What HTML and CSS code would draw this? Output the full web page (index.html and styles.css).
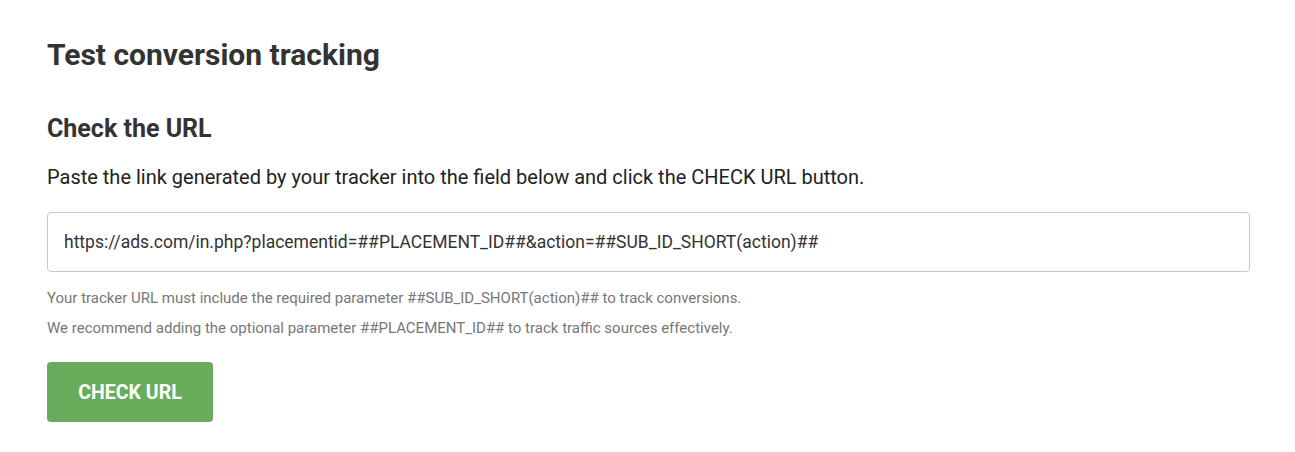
FILE: index.html
```html
<!DOCTYPE html>
<html lang="en">
<head>
<meta charset="utf-8">
<title>Test conversion tracking</title>
<link rel="stylesheet" href="styles.css">
</head>
<body>
<main class="page">
  <h1 class="title">Test conversion tracking</h1>
  <h2 class="subtitle">Check the URL</h2>
  <p class="lead">Paste the link generated by your tracker into the field below and click the CHECK URL button.</p>
  <div class="field">https://ads.com/in.php?placementid=##PLACEMENT_ID##&amp;action=##SUB_ID_SHORT(action)##</div>
  <p class="hint">Your tracker URL must include the required parameter ##SUB_ID_SHORT(action)## to track conversions.</p>
  <p class="hint">We recommend adding the optional parameter ##PLACEMENT_ID## to track traffic sources effectively.</p>
  <button class="btn" type="button">CHECK URL</button>
</main>
</body>
</html>
```

FILE: styles.css
```css
* { box-sizing: border-box; }
html, body { margin: 0; padding: 0; background: #fff; }
body { font-family: Roboto, "Noto Sans", sans-serif; color: #333; }
.page {
  padding: 37px 45px 0 47px;
  display: flex;
  flex-direction: column;
  align-items: flex-start;
}
.title {
  margin: 0;
  font-size: 30px;
  line-height: 36px;
  font-weight: 700;
  color: #333;
}
.subtitle {
  margin: 41px 0 0;
  font-size: 25px;
  line-height: 30px;
  font-weight: 700;
  color: #333;
}
.lead {
  margin: 19px 0 0;
  font-size: 20px;
  line-height: 28px;
  color: #222;
}
.field {
  align-self: stretch;
  margin-top: 21px;
  height: 60px;
  border: 1px solid #c8c8c8;
  border-radius: 4px;
  padding: 0 16px;
  display: flex;
  align-items: center;
  font-size: 17.5px;
  color: #333;
}
.hint {
  margin: 0;
  font-size: 15px;
  line-height: 20px;
  color: #777;
}
.field + .hint { margin-top: 16px; }
.hint + .hint { margin-top: 10px; }
.btn {
  margin-top: 24px;
  width: 166px;
  height: 60px;
  border: 0;
  border-radius: 4px;
  background: #67ad5b;
  color: #fff;
  font-family: Roboto, "Noto Sans", sans-serif;
  font-size: 19.5px;
  font-weight: 700;
  cursor: pointer;
}
```
